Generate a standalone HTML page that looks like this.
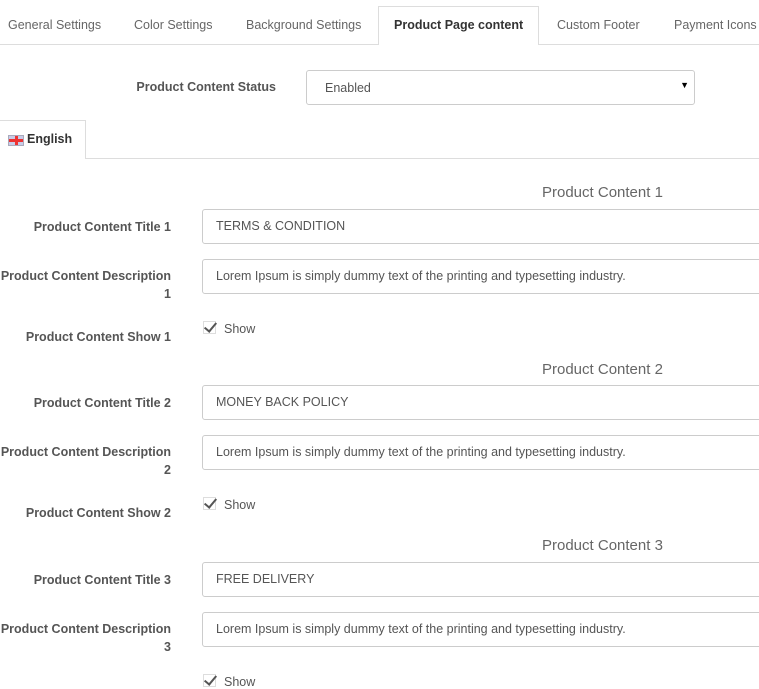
<!DOCTYPE html>
<html><head><meta charset="utf-8"><style>
*{box-sizing:border-box;margin:0;padding:0}
body{width:759px;height:683px;overflow:hidden;background:#fff;font-family:"Liberation Sans",sans-serif;color:#555;position:relative}
.a{position:absolute}
.tab{position:absolute;top:18px;font-size:12.5px;color:#666;white-space:nowrap}
.lbl{position:absolute;right:588px;font-size:12.5px;font-weight:bold;color:#555;text-align:right;line-height:18px;width:200px;white-space:nowrap}
.inp{position:absolute;left:202px;width:570px;height:35px;border:1px solid #ccc;border-radius:3px;font-size:12.5px;color:#555;padding:9px 13px;white-space:nowrap}
.h{position:absolute;left:542px;font-size:15px;color:#666}
.cb{position:absolute;left:203px;font-size:12.5px;color:#555}
.cb span{display:inline-block;width:13px;height:13px;border:1px solid #ddd;position:relative;vertical-align:-1px;margin-right:8px}
.cb span:after{content:"";position:absolute;left:3px;top:-2px;width:5px;height:10px;border:solid #555;border-width:0 2px 2px 0;transform:rotate(40deg)}
</style></head><body>
<div class="a" style="left:0;top:44px;width:759px;border-top:1px solid #ddd"></div>
<div class="tab" style="left:8px">General Settings</div>
<div class="tab" style="left:134px">Color Settings</div>
<div class="tab" style="left:246px">Background Settings</div>
<div class="a" style="left:378px;top:6px;width:161px;height:39px;border:1px solid #ddd;border-bottom:none;background:#fff"></div>
<div class="tab" style="left:394px;font-weight:bold;color:#333">Product Page content</div>
<div class="tab" style="left:557px">Custom Footer</div>
<div class="tab" style="left:674px">Payment Icons</div>

<div class="a" style="left:76px;top:80px;width:200px;text-align:right;font-size:12.5px;font-weight:bold">Product Content Status</div>
<div class="a" style="left:306px;top:70px;width:389px;height:35px;border:1px solid #ccc;border-radius:3px;font-size:12.5px;padding:10px 18px">Enabled<span style="position:absolute;right:5px;top:9px;font-size:9px;color:#000">▼</span></div>

<div class="a" style="left:0;top:158px;width:759px;border-top:1px solid #ddd"></div>
<div class="a" style="left:-1px;top:120px;width:87px;height:39px;border:1px solid #ddd;border-bottom:none;background:#fff"></div>
<div class="a" style="left:8px;top:135px;width:16px;height:11px;background:#c8cce8;border:1px solid #aab"><div style="position:absolute;left:6px;top:0;width:3px;height:9px;background:#e33"></div><div style="position:absolute;left:0;top:3px;width:14px;height:3px;background:#e33"></div></div>
<div class="a" style="left:27px;top:132px;font-size:12.5px;font-weight:bold;color:#333">English</div>

<div class="h" style="top:184px">Product Content 1</div>
<div class="lbl" style="top:218px">Product Content Title 1</div>
<div class="inp" style="top:209px">TERMS &amp; CONDITION</div>
<div class="lbl" style="top:267px">Product Content Description<br>1</div>
<div class="inp" style="top:259px">Lorem Ipsum is simply dummy text of the printing and typesetting industry.</div>
<div class="cb" style="top:321px"><span></span>Show</div>
<div class="lbl" style="top:328px">Product Content Show 1</div>

<div class="h" style="top:361px">Product Content 2</div>
<div class="lbl" style="top:394px">Product Content Title 2</div>
<div class="inp" style="top:385px">MONEY BACK POLICY</div>
<div class="lbl" style="top:443px">Product Content Description<br>2</div>
<div class="inp" style="top:435px">Lorem Ipsum is simply dummy text of the printing and typesetting industry.</div>
<div class="cb" style="top:497px"><span></span>Show</div>
<div class="lbl" style="top:504px">Product Content Show 2</div>

<div class="h" style="top:537px">Product Content 3</div>
<div class="lbl" style="top:571px">Product Content Title 3</div>
<div class="inp" style="top:562px">FREE DELIVERY</div>
<div class="lbl" style="top:620px">Product Content Description<br>3</div>
<div class="inp" style="top:612px">Lorem Ipsum is simply dummy text of the printing and typesetting industry.</div>
<div class="cb" style="top:674px"><span></span>Show</div>
</body></html>
